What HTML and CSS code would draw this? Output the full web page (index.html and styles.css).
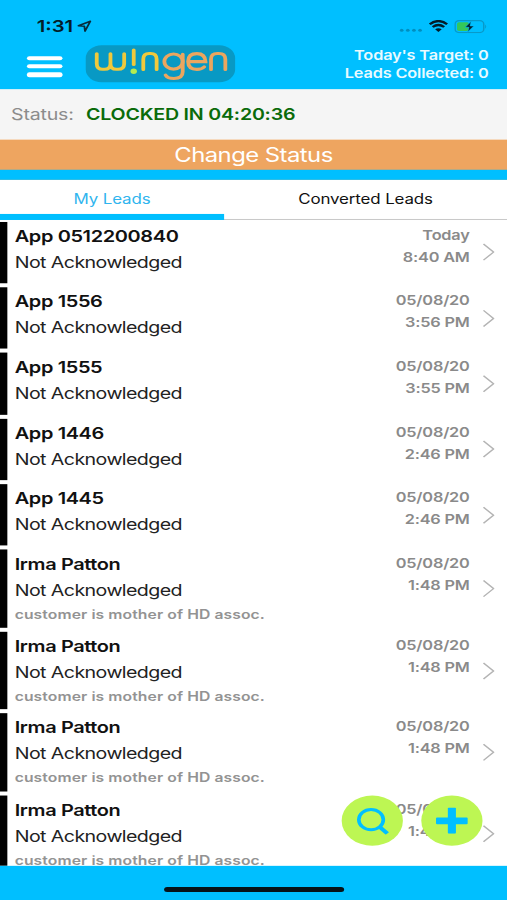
FILE: index.html
```html
<!DOCTYPE html>
<html lang="en">
  <head>
    <meta charset="utf-8">
    <title>Wingen Leads</title>
    <link rel="stylesheet" href="styles.css">
  </head>
  <body>
    <div class="app">
      <header class="header">
        <div class="status-bar">
          <span class="clock">1:31</span>
          <svg class="location" width="12" height="12" viewBox="0 0 12 12"><path d="M1 5.6 L10.8 1.2 L6.4 11 L5.9 6.1 Z" fill="none" stroke="#062b3c" stroke-width="1.5" stroke-linejoin="round"/></svg>
          <svg class="signal" width="19" height="4" viewBox="0 0 19 4" fill="#008fc0"><circle cx="2" cy="2" r="1.5"/><circle cx="7" cy="2" r="1.5"/><circle cx="12" cy="2" r="1.5"/><circle cx="17" cy="2" r="1.5"/></svg>
          <svg class="wifi" width="16" height="12" viewBox="0 0 16 12"><path d="M.9 4.1 Q8 -2.2 15.1 4.1 M3.3 6.9 Q8 2.9 12.7 6.9" fill="none" stroke="#031c28" stroke-width="2.2"/><path d="M8 11.8 L5.3 9.2 Q8 7 10.7 9.2 Z" fill="#031c28"/></svg>
          <svg class="battery" width="27" height="13" viewBox="0 0 27 13"><rect x=".6" y=".6" width="23.4" height="11.8" rx="3.2" fill="none" stroke="#0899c9" stroke-width="1.2"/><path d="M25.2 4.4 Q26.8 6.5 25.2 8.6 Z" fill="#0899c9"/><rect x="2.2" y="2.2" width="9.8" height="8.6" rx="1.6" fill="#35c759"/><path d="M13.8 1.2 L8.8 7.2 H11.9 L10.9 11.8 L16 5.8 H12.9 Z" fill="#031c28" stroke="#00bfff" stroke-width=".6"/></svg>
        </div>
        <div class="nav">
          <div class="menu"><i></i><i></i><i></i></div>
          <div class="logo">
            <svg width="122" height="37" viewBox="0 0 122 37" fill="none" stroke-width="3.1" stroke-linecap="round">
              <g stroke="#f0c93c">
                <path d="M9 8.5 V18.5 Q9 24 13.8 24 H15.3 Q20.2 24 20.2 18.5 V8.5 M20.2 18.5 Q20.2 24 25 24 H26.4 Q31.4 24 31.4 18.5 V8.5"/>
                <path d="M39.2 4.8 V19.2"/>
                <path d="M47 24.2 V14 Q47 8.3 51.8 8.3 H53 Q57.9 8.3 57.9 14 V24.2"/>
              </g>
              <ellipse cx="39.2" cy="26" rx="2.6" ry="2.7" fill="#b4ec51"/>
              <g stroke="#eba65f">
                <circle cx="71.7" cy="16.3" r="7.5"/>
                <path d="M79.2 9 V26.5 Q79.2 33.2 72 33.2 Q66.8 33.2 65.2 29.8"/>
                <path d="M83.8 16.4 H97.8 Q97.6 8.4 90.8 8.4 Q83.6 8.4 83.6 16.3 Q83.6 24.1 90.8 24.1 Q94.8 24.1 96.8 21.6"/>
                <path d="M102.3 24.2 V14 Q102.3 8.3 107.4 8.3 H108.8 Q114 8.3 114 14 V24.2"/>
              </g>
            </svg>
          </div>
          <div class="stats">
            <div class="target">Today's Target: 0</div>
            <div class="collected">Leads Collected: 0</div>
          </div>
        </div>
      </header>

      <div class="status">
        <span class="status-label">Status:</span>
        <span class="status-value">CLOCKED IN 04:20:36</span>
      </div>
      <div class="change-status"><span>Change Status</span></div>

      <div class="tabs">
        <div class="tab active">My Leads</div>
        <div class="tab">Converted Leads</div>
      </div>

      <div class="leads" id="leads"></div>

      <footer class="footer"><div class="home-indicator"></div></footer>

      <div class="fab search">
        <svg width="27" height="27" viewBox="0 0 27 27" fill="none" stroke="#00bfff" stroke-width="3"><circle cx="12" cy="12" r="10"/><path d="M18.6 18.8 L25.3 25.8" stroke-width="3.6"/></svg>
      </div>
      <div class="fab add">
        <svg width="26" height="26" viewBox="0 0 26 26" fill="#00bfff"><rect x="9.7" y="0" width="6.6" height="26" rx="1"/><rect x="0" y="9.9" width="26" height="6.6" rx="1"/></svg>
      </div>
    </div>

    <script>
      const note = 'customer is mother of HD assoc.';
      const leads = [
        { name: 'App 0512200840', date: 'Today', time: '8:40 AM' },
        { name: 'App 1556', date: '05/08/20', time: '3:56 PM' },
        { name: 'App 1555', date: '05/08/20', time: '3:55 PM' },
        { name: 'App 1446', date: '05/08/20', time: '2:46 PM' },
        { name: 'App 1445', date: '05/08/20', time: '2:46 PM' },
        { name: 'Irma Patton', date: '05/08/20', time: '1:48 PM', note: note },
        { name: 'Irma Patton', date: '05/08/20', time: '1:48 PM', note: note },
        { name: 'Irma Patton', date: '05/08/20', time: '1:48 PM', note: note },
        { name: 'Irma Patton', date: '05/08/20', time: '1:48 PM', note: note }
      ];

      document.querySelector('#leads').innerHTML = leads.map(lead => `
        <div class="lead${lead.note ? ' with-note' : ''}">
          <div class="info">
            <div class="name">${lead.name}</div>
            <div class="state">Not Acknowledged</div>
            ${lead.note ? `<div class="note">${lead.note}</div>` : ''}
          </div>
          <div class="when">
            <div>${lead.date}</div>
            <div>${lead.time}</div>
          </div>
          <svg class="chevron" width="10" height="18" viewBox="0 0 10 18"><path d="M.8 1 L9 9 L.8 17" fill="none" stroke="#b4b4b4" stroke-width="1.3"/></svg>
        </div>`).join('');
    </script>
  </body>
</html>
```

FILE: styles.css
```css
body {
  margin: 0;
  width: 507px;
  height: 900px;
  overflow: hidden;
  font-family: Inter, "Liberation Sans", sans-serif;
}

/* 414x896 screen stretched over the window */
.app {
  position: relative;
  display: flex;
  flex-direction: column;
  width: 414px;
  height: 896px;
  transform: scale(1.22464, 1.00446);
  transform-origin: 0 0;
  background: #fff;
  color: #111;
}

svg {
  display: block;
  flex: none;
}

.header {
  flex: none;
  height: 89px;
  background: #00bfff;
}

.status-bar {
  display: flex;
  align-items: center;
  height: 16px;
  padding: 18px 16px 0 30px;
}

.clock {
  width: 33px;
  font-size: 16.5px;
  font-weight: 600;
  line-height: 16px;
  color: #031c28;
}

.signal {
  margin: 8px 5px 0 auto;
}

.wifi {
  margin-right: 5px;
}

.nav {
  display: flex;
  height: 55px;
  padding-right: 15px;
}

.menu {
  display: flex;
  flex-direction: column;
  gap: 4px;
  margin: 22px 0 0 22px;
}

.menu i {
  width: 29px;
  height: 4.2px;
  border-radius: 2px;
  background: #fff;
}

.logo {
  height: 37px;
  margin: 11px 0 0 18.5px;
  border-radius: 13px;
  background: #0899c4;
}

.stats {
  margin: 12px 0 0 auto;
  font-size: 13.3px;
  font-weight: 600;
  line-height: 18px;
  letter-spacing: -0.12px;
  text-align: right;
  white-space: nowrap;
  color: #e9faff;
}

.status {
  display: flex;
  flex: none;
  align-items: center;
  gap: 10px;
  height: 49.5px;
  padding: 0 0 2px 9px;
  box-sizing: border-box;
  background: #f5f5f5;
  font-size: 16px;
  letter-spacing: -0.16px;
}

.status-label {
  color: #8c8c8c;
}

.status-value {
  font-weight: 600;
  color: #0a6b0a;
}

.change-status {
  flex: none;
  height: 30px;
  border-bottom: 10.5px solid #00bfff;
  background: #eea560;
  font-size: 19.5px;
  line-height: 31px;
  letter-spacing: -0.45px;
  text-align: center;
  color: #fff;
}

.tabs {
  display: flex;
  flex: none;
  height: 40.5px;
  box-sizing: border-box;
  border-bottom: 1px solid #c8c8c8;
}

.tab {
  flex: 1;
  font-size: 13.8px;
  line-height: 38px;
  letter-spacing: -0.1px;
  text-align: center;
}

.tab.active {
  flex: none;
  width: 183px;
  height: 40.5px;
  box-sizing: border-box;
  border-bottom: 6px solid #00bfff;
  color: #30b5ee;
}

.leads {
  flex: none;
  height: 642.5px;
  padding-top: 1.5px;
  box-sizing: border-box;
  overflow: hidden;
}

.lead {
  display: flex;
  height: 61.4px;
  margin-bottom: 4px;
  padding-right: 10px;
  border-left: 6px solid #000;
}

.lead.with-note {
  height: 77.4px;
}

.info {
  flex: 1;
  padding-left: 6px;
}

.name {
  margin-top: 1px;
  font-size: 16.3px;
  font-weight: 600;
  line-height: 27px;
  letter-spacing: -0.3px;
}

.state {
  font-size: 16px;
  line-height: 25px;
  letter-spacing: -0.47px;
  color: #222;
}

.note {
  font-size: 12.8px;
  font-weight: 600;
  line-height: 24px;
  letter-spacing: 0.08px;
  color: #939393;
}

.when {
  margin-top: 2px;
  font-size: 13.3px;
  font-weight: 600;
  line-height: 22px;
  letter-spacing: -0.15px;
  text-align: right;
  color: #8a8a8a;
}

.chevron {
  align-self: center;
  margin-left: 10.5px;
}

.footer {
  flex: 1;
  background: #00bfff;
}

.home-indicator {
  width: 147px;
  height: 5px;
  margin: 21px auto 0;
  border-radius: 3px;
  background: #061218;
}

.fab {
  position: absolute;
  top: 792px;
  display: flex;
  align-items: center;
  justify-content: center;
  width: 50px;
  height: 50px;
  border-radius: 50%;
  background: #bdf653;
}

.search {
  left: 279px;
}

.add {
  left: 344px;
}
```
